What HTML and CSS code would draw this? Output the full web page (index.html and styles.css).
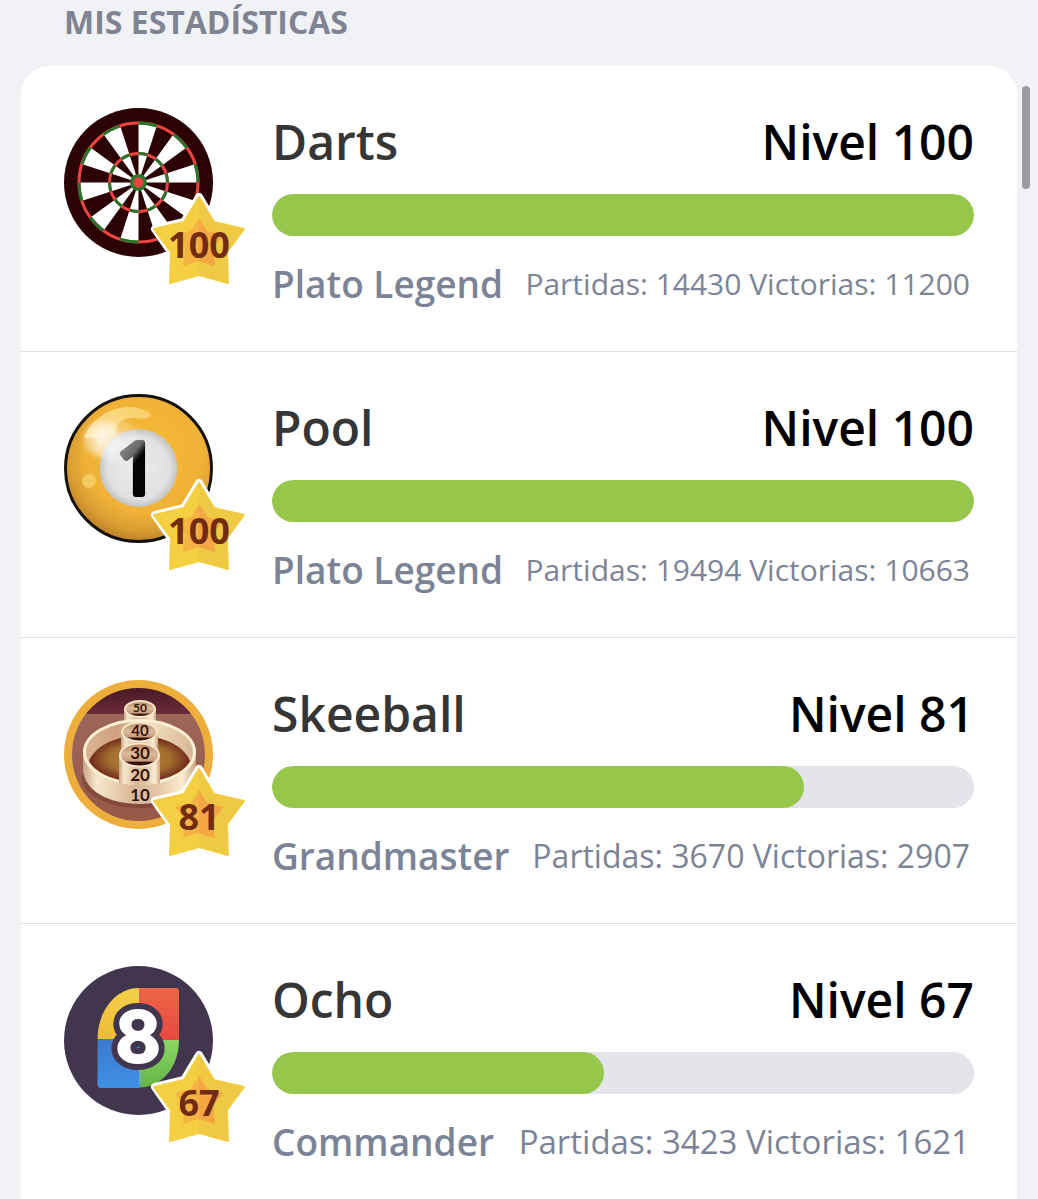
FILE: index.html
```html
<!DOCTYPE html>
<html lang="es">
<head>
<meta charset="utf-8">
<meta name="viewport" content="width=device-width, initial-scale=1">
<title>Mis estadísticas</title>
<link rel="stylesheet" href="styles.css">
</head>
<body>
<svg class="defs" aria-hidden="true">
  <defs>
    <symbol id="star" viewBox="0 0 96 96" overflow="visible">
      <path d="M48 5 63 30 92 37 76 60V91L48 83 20 91V60L4 37 33 30Z" fill="#fff" stroke="#fff" stroke-width="8" stroke-linejoin="round"/>
      <path d="M48 5 63 30 93 37 76 60 77 91 48 83 19 91 20 60 3 37 33 30Z" fill="#f4cf42" stroke="#f4cf42" stroke-width="2" stroke-linejoin="round"/>
      <path d="M48 5 63 30 93 37 76 60 77 91 48 83Z" fill="#efc844"/>
      <path d="M48 26 56 39 72 43 62 56 64 74 48 69 32 74 34 56 24 43 40 39Z" fill="#f5b343"/>
      <path d="M48 26 56 39 72 43 62 56 64 74 48 69Z" fill="#f3a643"/>
    </symbol>
  </defs>
</svg>
<main class="page">
  <h1 class="heading">MIS ESTADÍSTICAS</h1>
  <ul class="card">
    <li class="game">
      <div class="avatar">
        <svg class="icon" viewBox="0 0 149 149" aria-hidden="true">
          <circle cx="74.500" cy="74.500" r="74.500" fill="#2b0305"/>
          <g fill="none" transform="rotate(-90 74.500 74.500)">
            <circle cx="74.500" cy="74.500" r="29.500" stroke="#fff" stroke-width="59" pathLength="20" stroke-dasharray="1 1"/>
            <circle cx="74.500" cy="74.500" r="59.500" stroke="#ef4540" stroke-width="3"/>
            <circle cx="74.500" cy="74.500" r="59.500" stroke="#25752a" stroke-width="3" pathLength="20" stroke-dasharray="1 1"/>
            <circle cx="74.500" cy="74.500" r="29" stroke="#ef4540" stroke-width="3"/>
            <circle cx="74.500" cy="74.500" r="29" stroke="#25752a" stroke-width="3" pathLength="20" stroke-dasharray="1 1"/>
          </g>
          <circle cx="74.500" cy="74.500" r="8.500" fill="#30742c"/>
          <circle cx="74.500" cy="74.500" r="5" fill="#ef4540"/>
        </svg>
        <div class="badge"><svg class="star" aria-hidden="true"><use href="#star"/></svg><span class="badge-number">100</span></div>
      </div>
      <div class="details">
        <div class="title"><h2 class="name" id="darts">Darts</h2><span class="level">Nivel 100</span></div>
        <progress class="bar" value="100" max="100" aria-labelledby="darts"></progress>
        <div class="summary"><span class="rank">Plato Legend</span><span class="stats">Partidas: 14430 Victorias: 11200</span></div>
      </div>
    </li>
    <li class="game">
      <div class="avatar">
        <svg class="icon" viewBox="0 0 149 149" aria-hidden="true">
          <defs>
            <radialGradient id="pool-body" cx=".54" cy=".4" r=".62"><stop offset="0" stop-color="#f7bd35"/><stop offset=".65" stop-color="#f0b137"/><stop offset=".85" stop-color="#d89c32"/><stop offset="1" stop-color="#b67d25"/></radialGradient>
            <radialGradient id="pool-spot"><stop offset="0" stop-color="#ededed"/><stop offset=".8" stop-color="#e0e0e1"/><stop offset="1" stop-color="#c4c3c1"/></radialGradient>
            <linearGradient id="pool-one" gradientUnits="userSpaceOnUse" x1="60" y1="48" x2="80" y2="64"><stop offset="0" stop-color="#8b8b8b"/><stop offset=".55" stop-color="#6a6a6a"/><stop offset=".85" stop-color="#050505"/></linearGradient>
            <radialGradient id="pool-shine"><stop offset="0" stop-color="#fff" stop-opacity=".8"/><stop offset=".7" stop-color="#fff" stop-opacity=".4"/><stop offset="1" stop-color="#fff" stop-opacity="0"/></radialGradient>
            <linearGradient id="pool-gloss" x1="0" x2="1"><stop offset="0" stop-color="#fff0b0" stop-opacity=".7"/><stop offset="1" stop-color="#ffe08c" stop-opacity=".6"/></linearGradient>
          </defs>
          <circle cx="74.500" cy="74.500" r="73" fill="url(#pool-body)" stroke="#15120e" stroke-width="3"/>
          <path d="M20 44C29 19 62 5 84 18 91 23 84 26 72 24 56 23 50 32 52 42Z" fill="url(#pool-gloss)"/>
          <circle cx="74.500" cy="74" r="39" fill="url(#pool-spot)"/>
          <circle cx="38" cy="45" r="21" fill="url(#pool-shine)"/>
          <circle cx="53" cy="48" r="26" fill="url(#pool-shine)" opacity=".6"/>
          <circle cx="25" cy="87" r="7" fill="#f6d269" opacity=".8"/>
          <text x="73" y="100" class="pool-number">1</text>
        </svg>
        <div class="badge"><svg class="star" aria-hidden="true"><use href="#star"/></svg><span class="badge-number">100</span></div>
      </div>
      <div class="details">
        <div class="title"><h2 class="name" id="pool">Pool</h2><span class="level">Nivel 100</span></div>
        <progress class="bar" value="100" max="100" aria-labelledby="pool"></progress>
        <div class="summary"><span class="rank">Plato Legend</span><span class="stats">Partidas: 19494 Victorias: 10663</span></div>
      </div>
    </li>
    <li class="game">
      <div class="avatar">
        <svg class="icon" viewBox="0 0 149 149" aria-hidden="true">
          <defs>
            <clipPath id="skee-clip"><circle cx="74.500" cy="74.500" r="66.500"/></clipPath>
            <linearGradient id="skee-back" x2="0" y2="1"><stop offset="0" stop-color="#3d1420"/><stop offset="1" stop-color="#6d2b3b"/></linearGradient>
            <linearGradient id="skee-lane" x2="0" y2="1"><stop offset="0" stop-color="#9d665b"/><stop offset="1" stop-color="#965846"/></linearGradient>
            <linearGradient id="skee-wall"><stop offset="0" stop-color="#c9a483"/><stop offset=".12" stop-color="#f6e8cc"/><stop offset=".45" stop-color="#d8b695"/><stop offset=".65" stop-color="#e2c5a5"/><stop offset=".88" stop-color="#fcecd0"/><stop offset="1" stop-color="#c9a483"/></linearGradient>
            <linearGradient id="skee-inner"><stop offset="0" stop-color="#d9b393"/><stop offset=".3" stop-color="#cfa180"/><stop offset=".6" stop-color="#f1dfbd"/><stop offset="1" stop-color="#d8b594"/></linearGradient>
            <radialGradient id="skee-floor"><stop offset="0" stop-color="#ae8130"/><stop offset=".6" stop-color="#a3702f"/><stop offset="1" stop-color="#6e291b"/></radialGradient>
            <linearGradient id="skee-hole" x2="0" y2="1"><stop offset="0" stop-color="#b78768"/><stop offset=".45" stop-color="#dcbb98"/><stop offset=".76" stop-color="#c99b7b"/><stop offset=".82" stop-color="#34100c"/></linearGradient>
          </defs>
          <circle cx="74.500" cy="74.500" r="74.500" fill="#edae3c"/>
          <g clip-path="url(#skee-clip)">
            <path d="M0 0H149V34H0Z" fill="url(#skee-back)"/>
            <path d="M0 34H149V149H0Z" fill="url(#skee-lane)"/>
            <ellipse cx="76" cy="98" rx="58" ry="30" fill="#6f382c" opacity=".5"/>
          </g>
          <path d="M60 28V42H92V28Z" fill="url(#skee-wall)"/>
          <ellipse cx="76" cy="29" rx="15" ry="8" fill="url(#skee-hole)" stroke="#f7e6c9" stroke-width="2"/>
          <path d="M19 71V90C20 110 44 124 75.500 124S131 110 132 90V71Z" fill="url(#skee-wall)"/>
          <ellipse cx="75.500" cy="72" rx="55" ry="31.500" fill="url(#skee-inner)" stroke="#fff0d3" stroke-width="3"/>
          <path d="M25 81C32 65 52 56 75.500 56S119 65 126 81C119 94 98 102 75.500 102S32 94 25 81Z" fill="url(#skee-floor)"/>
          <path d="M57 51V70H94V51Z" fill="url(#skee-wall)"/>
          <ellipse cx="75.500" cy="52" rx="17.500" ry="9.500" fill="url(#skee-hole)" stroke="#f7e6c9" stroke-width="2"/>
          <path d="M55 74V103Q75 107 96 103V74Z" fill="url(#skee-wall)"/>
          <ellipse cx="75.500" cy="75" rx="19.500" ry="11.500" fill="url(#skee-hole)" stroke="#f7e6c9" stroke-width="2"/>
          <g class="skee-numbers">
            <text x="76" y="32" class="skee-far">50</text>
            <text x="76" y="56" class="skee-middle">40</text>
            <text x="76" y="79">30</text>
            <text x="76" y="101">20</text>
            <text x="76" y="121">10</text>
          </g>
        </svg>
        <div class="badge"><svg class="star" aria-hidden="true"><use href="#star"/></svg><span class="badge-number">81</span></div>
      </div>
      <div class="details">
        <div class="title"><h2 class="name" id="skeeball">Skeeball</h2><span class="level">Nivel 81</span></div>
        <progress class="bar" value="758" max="1000" aria-labelledby="skeeball"></progress>
        <div class="summary"><span class="rank">Grandmaster</span><span class="stats stats-large">Partidas: 3670 Victorias: 2907</span></div>
      </div>
    </li>
    <li class="game">
      <div class="avatar">
        <svg class="icon" viewBox="0 0 149 149" aria-hidden="true">
          <defs>
            <linearGradient id="ocho-yellow" x2="0" y2="1"><stop offset="0" stop-color="#f4d04a"/><stop offset="1" stop-color="#efbb38"/></linearGradient>
            <linearGradient id="ocho-red" x2="0" y2="1"><stop offset="0" stop-color="#ed6548"/><stop offset="1" stop-color="#e94840"/></linearGradient>
            <linearGradient id="ocho-blue" x2="0" y2="1"><stop offset="0" stop-color="#3c79ce"/><stop offset="1" stop-color="#3f91e4"/></linearGradient>
            <linearGradient id="ocho-green" x2="0" y2="1"><stop offset="0" stop-color="#8cd465"/><stop offset="1" stop-color="#62b744"/></linearGradient>
          </defs>
          <circle cx="74.500" cy="74.500" r="74.500" fill="#42354e"/>
          <path d="M75 22V73H33.500C33.500 46 51 22 75 22Z" fill="url(#ocho-yellow)"/>
          <path d="M75 22H112Q115 22 115 25V74H75Z" fill="url(#ocho-red)"/>
          <path d="M33.500 73H75V122H37Q33.500 122 33.500 118Z" fill="url(#ocho-blue)"/>
          <path d="M75 74H115C115 100 99 121 75 121.500Z" fill="url(#ocho-green)"/>
          <text x="74" y="96" class="ocho-number ocho-outline">8</text>
          <text x="74" y="96" class="ocho-number">8</text>
        </svg>
        <div class="badge"><svg class="star" aria-hidden="true"><use href="#star"/></svg><span class="badge-number">67</span></div>
      </div>
      <div class="details">
        <div class="title"><h2 class="name" id="ocho">Ocho</h2><span class="level">Nivel 67</span></div>
        <progress class="bar" value="473" max="1000" aria-labelledby="ocho"></progress>
        <div class="summary"><span class="rank">Commander</span><span class="stats stats-larger">Partidas: 3423 Victorias: 1621</span></div>
      </div>
    </li>
  </ul>
  <div class="scroll-thumb" aria-hidden="true"></div>
</main>
</body>
</html>
```
FILE: styles.css
```css
* {
  box-sizing: border-box;
}

html {
  scrollbar-width: none;
}

body {
  margin: 0;
  background: #f1f2f6;
  font-family: "Open Sans", sans-serif;
}

.defs {
  position: absolute;
  width: 0;
  height: 0;
}

.page {
  position: relative;
  padding: 0 21px;
}

.heading {
  margin: 0;
  padding: 0 43px 22px;
  color: #7e8494;
  font-size: 32px;
  font-weight: 700;
  line-height: 44px;
}

.card {
  margin: 0;
  padding: 0;
  border-radius: 28px 28px 0 0;
  background: #fff;
  list-style: none;
}

.game {
  display: grid;
  grid-template-columns: 149px minmax(0, 1fr);
  gap: 59px;
  padding: 42px 43px 37px;
  border-bottom: 1px solid #dfdfe2;
}

.game:last-child {
  border-bottom: 0;
}

.avatar {
  position: relative;
  height: 149px;
}

.icon {
  display: block;
  width: 149px;
  height: 149px;
}

.badge {
  position: absolute;
  top: 84px;
  left: 87px;
  display: grid;
  place-items: center;
  width: 96px;
  height: 96px;
}

.star {
  grid-area: 1 / 1;
  width: 96px;
  height: 96px;
  overflow: visible;
}

.badge-number {
  grid-area: 1 / 1;
  padding-top: 10px;
  z-index: 1;
  color: #712c12;
  font-size: 36px;
  font-weight: 700;
  line-height: 48px;
}

.details {
  display: flex;
  flex-direction: column;
  gap: 18px;
}

.title,
.summary {
  display: flex;
  justify-content: space-between;
  white-space: nowrap;
}

.title {
  font-size: 48px;
  line-height: 68px;
}

.name {
  margin: 0;
  color: #363636;
  font-size: inherit;
  font-weight: 600;
}

.level {
  color: #000;
  font-weight: 600;
}

.bar {
  display: block;
  width: 100%;
  height: 42px;
  overflow: hidden;
  border: 0;
  border-radius: 21px;
  background: #e4e5ea;
  appearance: none;
}

.bar::-webkit-progress-bar {
  border-radius: 21px;
  background: #e4e5ea;
}

.bar::-webkit-progress-value {
  border-radius: 21px;
  background: #96c64a;
}

.summary {
  padding-right: 4px;
  color: #7b8496;
  line-height: 60px;
}

.rank {
  font-size: 37px;
  font-weight: 600;
}

.stats {
  font-size: 30px;
}

.stats-large {
  font-size: 32px;
}

.stats-larger {
  font-size: 33px;
}

.scroll-thumb {
  position: absolute;
  top: 86px;
  right: 8px;
  width: 8px;
  height: 103px;
  border-radius: 4px;
  background: #9b9c9f;
}

.pool-number {
  fill: url(#pool-one);
  stroke: url(#pool-one);
  stroke-width: 6px;
  stroke-linejoin: round;
  font-family: "Noto Sans", sans-serif;
  font-size: 72px;
  font-weight: 400;
  text-anchor: middle;
}

.skee-numbers {
  fill: #34130e;
  font-family: Lato, sans-serif;
  font-size: 17px;
  font-weight: 700;
  text-anchor: middle;
}

.skee-far {
  font-size: 12px;
}

.skee-middle {
  font-size: 15px;
}

.ocho-number {
  fill: #fff;
  stroke: #fff;
  stroke-width: 2px;
  stroke-linejoin: round;
  font-family: Inter, sans-serif;
  font-size: 70px;
  font-weight: 700;
  text-anchor: middle;
}

.ocho-outline {
  stroke: #42354e;
  stroke-width: 14px;
}
```
